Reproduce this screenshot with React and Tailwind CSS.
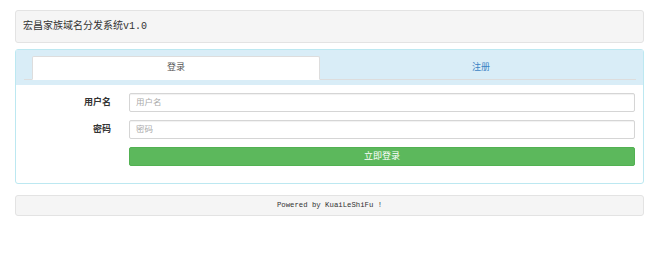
import React from "react";

export default function App() {
  const sans = { fontFamily: '"Liberation Sans", "Noto Sans CJK SC", sans-serif' };
  return (
    <div className="w-[650px] h-[255px] bg-white pt-[10px] pl-[15px] pr-[6px]" style={sans}>
      <div
        className="h-[33px] flex items-center pl-[7px] bg-[#f5f5f5] border border-[#e3e3e3] rounded-[3px] text-[10px] text-[#333]"
        style={{ fontFamily: '"Liberation Mono", "Noto Sans CJK SC", monospace' }}
      >
        宏昌家族域名分发系统v1.0
      </div>

      <div className="mt-[6px] border border-[#bce8f1] rounded-[3px] h-[135px] flex flex-col">
        <div className="bg-[#d9edf7] h-[35px] pt-[6px] pl-[8px] pr-[7px]">
          <div className="flex border-b border-[#dddddd] h-[24px] pl-[8px]">
            <div className="w-[288px] h-[24px] bg-white border border-[#dddddd] border-b-white rounded-t-[2px] flex items-center justify-center text-[9px] text-[#555]">
              登录
            </div>
            <div className="flex-1 h-[23px] flex items-center justify-center text-[9px] text-[#3c84c4] pl-[6px]">
              注册
            </div>
          </div>
        </div>
        <div className="pt-[8px] pr-[8px] flex flex-col gap-[8px]">
          <div className="flex items-center">
            <div className="w-[95px] text-right text-[9px] font-bold text-[#333]">用户名</div>
            <div className="ml-[18px] flex-1 h-[19px] border border-[#d5d5d5] rounded-[2px] bg-white flex items-center pl-[6px] text-[8.5px] text-[#aaa] shadow-[inset_0_1px_1px_rgba(0,0,0,0.06)]">
              用户名
            </div>
          </div>
          <div className="flex items-center">
            <div className="w-[95px] text-right text-[9px] font-bold text-[#333]">密码</div>
            <div className="ml-[18px] flex-1 h-[19px] border border-[#d5d5d5] rounded-[2px] bg-white flex items-center pl-[6px] text-[8.5px] text-[#aaa] shadow-[inset_0_1px_1px_rgba(0,0,0,0.06)]">
              密码
            </div>
          </div>
          <div className="flex items-center">
            <div className="w-[95px]"></div>
            <div className="ml-[18px] flex-1 h-[19px] border border-[#52b152] rounded-[2px] bg-[#5cb85c] flex items-center justify-center text-[9px] text-white">
              立即登录
            </div>
          </div>
        </div>
      </div>

      <div
        className="mt-[11px] h-[21px] flex items-center justify-center bg-[#f5f5f5] border border-[#e3e3e3] rounded-[3px] text-[7.3px] text-[#333]"
        style={{ fontFamily: '"Liberation Mono", monospace' }}
      >
        Powered by KuaiLeShiFu !
      </div>
    </div>
  );
}
